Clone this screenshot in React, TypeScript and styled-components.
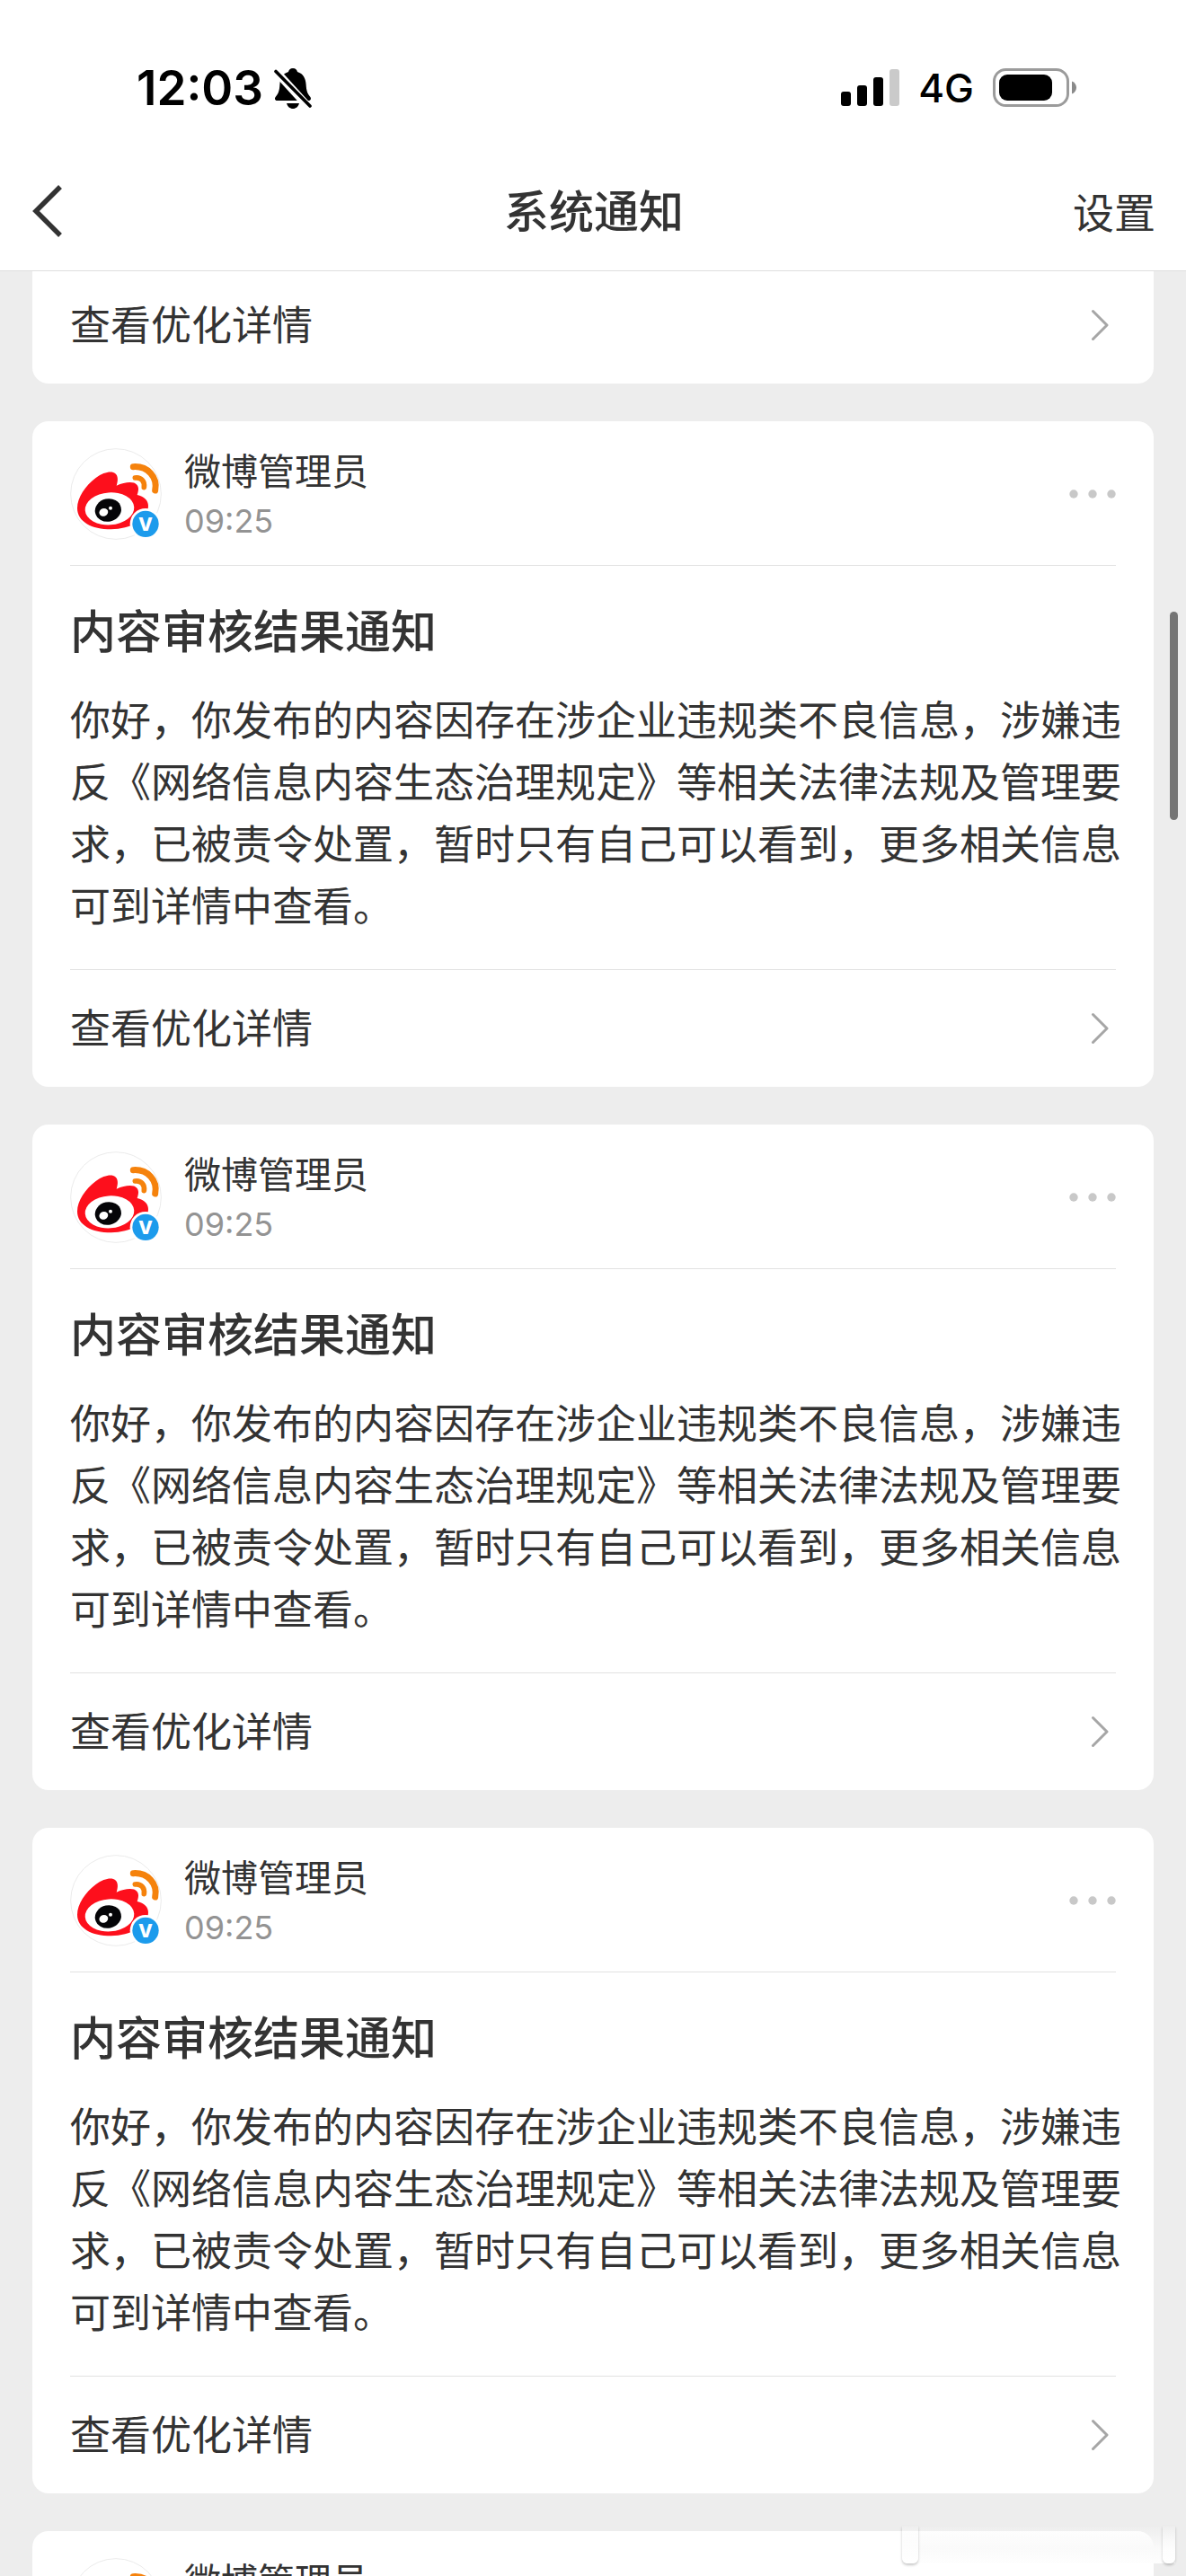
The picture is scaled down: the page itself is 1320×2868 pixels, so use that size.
import React from "react";
import styled, { createGlobalStyle } from "styled-components";

const INK = "#333333";
const LINE = "#e2e2e2";
const CANVAS = "#ededed";

const GlobalStyle = createGlobalStyle`
  * { box-sizing: border-box; }
  body {
    margin: 0;
    background: ${CANVAS};
    color: ${INK};
    font-family: Inter, "Noto Sans CJK SC", sans-serif;
  }
  button { border: 0; padding: 0; background: none; color: inherit; font: inherit; cursor: pointer; }
  h1, h2, p { margin: 0; }
  svg { display: block; flex: none; }
`;

const Screen = styled.div`
  position: relative;
  display: flex;
  flex-direction: column;
  height: 100vh;
  overflow: hidden;
`;

const Header = styled.header`
  position: relative;
  z-index: 1;
  flex: none;
  background: #fff;
  border-bottom: 1px solid #dedede;
`;

const StatusBar = styled.div`
  display: flex;
  align-items: center;
  justify-content: space-between;
  height: 172px;
  padding: 24px 122px 0 152px;
  color: #000;
`;

const StatusGroup = styled.div<{ $gap: number }>`
  display: flex;
  align-items: center;
  gap: ${(p) => p.$gap}px;
`;

const Clock = styled.time`
  font-size: 53px;
  font-weight: 600;
  line-height: 60px;
`;

const Network = styled.span`
  font-size: 44px;
  font-weight: 500;
  line-height: 60px;
`;

const NavBar = styled.nav`
  display: grid;
  grid-template-columns: 1fr auto 1fr;
  align-items: baseline;
  height: 129px;
  padding: 28px 34px 0 36px;
`;

const NavTitle = styled.h1`
  font-size: 50px;
  font-weight: 500;
  line-height: 72px;
`;

const BackButton = styled.button`
  align-self: start;
  justify-self: start;
  padding: 6px 0;
`;

const SettingsButton = styled.button`
  justify-self: end;
  font-size: 46px;
  line-height: 72px;
`;

const Feed = styled.main`
  display: flex;
  flex-direction: column;
  gap: 42px;
  margin-top: -6px;
  padding: 0 36px;
`;

const Card = styled.article<{ $continued?: boolean }>`
  flex: none;
  padding: 0 42px;
  border-radius: ${(p) => (p.$continued ? "0 0 18px 18px" : "18px")};
  background: #fff;
`;

const CardHead = styled.header`
  display: flex;
  align-items: center;
  gap: 25px;
  height: 161px;
  padding-top: 2px;
  border-bottom: 1px solid ${LINE};
`;

const Sender = styled.div`
  flex: 1;
  padding-top: 4px;
`;

const SenderName = styled.div`
  font-size: 41px;
  line-height: 56px;
`;

const SentAt = styled.time`
  display: block;
  color: #939393;
  font-size: 36px;
  line-height: 54px;
`;

const CardBody = styled.div`
  display: grid;
  gap: 34px;
  margin-right: -12px;
  padding: 44px 0 35px;
`;

const NoticeTitle = styled.h2`
  font-size: 51px;
  font-weight: 500;
  line-height: 60px;
`;

const NoticeText = styled.p`
  font-size: 45px;
  line-height: 69px;
`;

const DetailLink = styled.a`
  display: flex;
  align-items: center;
  justify-content: space-between;
  height: 131px;
  padding-right: 8px;
  border-top: 1px solid ${LINE};
  color: inherit;
  font-size: 45px;
  line-height: 69px;
  text-decoration: none;
`;

const ScrollThumb = styled.div`
  position: absolute;
  z-index: 2;
  top: 681px;
  right: 9px;
  width: 9px;
  height: 232px;
  border-radius: 5px;
  background: #757575;
`;

const Smudge = styled.div`
  position: absolute;
  z-index: 2;
  right: 12px;
  bottom: 14px;
  display: flex;
  justify-content: space-between;
  width: 304px;
  height: 42px;
  background: linear-gradient(rgba(250, 250, 250, 0), #fafafa 60%, #fefefe);
`;

const SmudgeEdge = styled.span<{ $width: number }>`
  width: ${(p) => p.$width}px;
  border-radius: 0 0 6px 6px;
  background: linear-gradient(rgba(255, 255, 255, 0), #fff);
  box-shadow: 0 2px 3px rgba(0, 0, 0, 0.22);
`;

const BellOff = () => (
  <svg width="42" height="45" viewBox="0 0 42 45" aria-hidden="true">
    <path
      d="M21 0c3 0 4.600 1.700 5 4 6.500 2 9.200 7.500 9.600 14 .4 7 1.600 10.500 4.400 13.500 1.700 1.900 1.200 4.500-1.500 4.500H3.500C.8 36 .3 33.400 2 31.500c2.800-3 4-6.500 4.400-13.500C6.800 11.500 9.500 6 16 4c.4-2.300 2-4 5-4z"
      fill="#000"
    />
    <path d="M14 39h14c-1 3.800-3.600 6-7 6s-6-2.200-7-6z" fill="#000" />
    <path d="M-1 0 41 46" stroke="#fff" strokeWidth="9" />
    <path d="M2 3.500 40 42" stroke="#000" strokeWidth="3.600" strokeLinecap="round" />
  </svg>
);

const Signal = () => (
  <svg width="65" height="42" viewBox="0 0 65 42" aria-hidden="true">
    <rect x="0" y="25" width="11" height="16" rx="3" />
    <rect x="18" y="18" width="11" height="23" rx="3" />
    <rect x="36" y="9" width="11" height="32" rx="3" />
    <rect x="54" y="0" width="11" height="41" rx="3" fill="#cacaca" />
  </svg>
);

const Battery = () => (
  <svg width="93" height="44" viewBox="0 0 93 44" aria-hidden="true">
    <rect x="1.500" y="1.500" width="82" height="40" rx="13" fill="none" stroke="#9b9b9b" strokeWidth="3" />
    <rect x="7" y="7" width="59" height="29" rx="9" />
    <path d="M88 14.500c3 1 5 3.700 5 7s-2 6-5 7z" fill="#8a8a8a" />
  </svg>
);

const BackIcon = () => (
  <svg width="34" height="58" viewBox="0 0 34 58" aria-hidden="true">
    <path d="M31 2 4 29l27 27" fill="none" stroke={INK} strokeWidth="5.500" />
  </svg>
);

const Chevron = () => (
  <svg width="20" height="36" viewBox="0 0 20 36" aria-hidden="true">
    <path d="M2.500 2.500 18 18 2.500 33.500" fill="none" stroke="#a6a6a6" strokeWidth="3" strokeLinecap="round" strokeLinejoin="round" />
  </svg>
);

const MoreIcon = () => (
  <svg width="52" height="60" viewBox="0 0 52 60" aria-hidden="true" fill="#c8c8c8">
    <circle cx="5" cy="30" r="4.700" />
    <circle cx="26" cy="30" r="4.700" />
    <circle cx="47" cy="30" r="4.700" />
  </svg>
);

const Avatar = () => (
  <svg width="102" height="102" viewBox="54 57 306 306" role="img" aria-label="微博管理员">
    <circle cx="207" cy="210" r="151" fill="#fff" stroke="#ebebeb" strokeWidth="3" />
    <path
      d="M78 257C78 222 105 182 140 156c28-21 55-24 65-14 9 8 10 22 4 40 28-12 57-15 68-3 7 8 6 19 1 34 23 5 37 18 37 37 0 44-60 78-124 78C126 328 78 302 78 257z"
      fill="#fd0f1c"
    />
    <ellipse cx="186" cy="259" rx="82" ry="54" fill="#fff" transform="rotate(-4 186 259)" />
    <ellipse cx="181" cy="264" rx="44" ry="38" fill="#050508" transform="rotate(-12 181 264)" />
    <ellipse cx="166" cy="271" rx="15" ry="13" fill="#fff" transform="rotate(-20 166 271)" />
    <circle cx="189" cy="257" r="6" fill="#fff" />
    <path d="M265 119c48-3 82 34 73 79" fill="none" stroke="#f5820c" strokeWidth="21" strokeLinecap="round" />
    <path d="M271 156c20-3 33 12 30 32" fill="none" stroke="#f5820c" strokeWidth="17" strokeLinecap="round" />
    <circle cx="306" cy="310" r="52" fill="#fff" />
    <circle cx="306" cy="310" r="44" fill="#1c9bec" />
    <text x="306" y="333" textAnchor="middle" fontFamily="Inter, sans-serif" fontWeight="800" fontSize="62" fill="#fff">
      V
    </text>
  </svg>
);

interface Notice {
  id: number;
  sender: string;
  time: string;
  title: string;
  text: string;
}

const notices: Notice[] = [1, 2, 3, 4].map((id) => ({
  id,
  sender: "微博管理员",
  time: "09:25",
  title: "内容审核结果通知",
  text: "你好，你发布的内容因存在涉企业违规类不良信息，涉嫌违反《网络信息内容生态治理规定》等相关法律法规及管理要求，已被责令处置，暂时只有自己可以看到，更多相关信息可到详情中查看。",
}));

const DetailRow = () => (
  <DetailLink href="#detail">
    查看优化详情
    <Chevron />
  </DetailLink>
);

const NoticeCard = ({ notice }: { notice: Notice }) => (
  <Card>
    <CardHead>
      <Avatar />
      <Sender>
        <SenderName>{notice.sender}</SenderName>
        <SentAt>{notice.time}</SentAt>
      </Sender>
      <button type="button" aria-label="更多">
        <MoreIcon />
      </button>
    </CardHead>
    <CardBody>
      <NoticeTitle>{notice.title}</NoticeTitle>
      <NoticeText>{notice.text}</NoticeText>
    </CardBody>
    <DetailRow />
  </Card>
);

export default function App() {
  return (
    <Screen lang="zh-CN">
      <GlobalStyle />
      <Header>
        <StatusBar>
          <StatusGroup $gap={12}>
            <Clock>12:03</Clock>
            <BellOff />
          </StatusGroup>
          <StatusGroup $gap={21}>
            <Signal />
            <Network>4G</Network>
            <Battery />
          </StatusGroup>
        </StatusBar>
        <NavBar>
          <BackButton type="button" aria-label="返回">
            <BackIcon />
          </BackButton>
          <NavTitle>系统通知</NavTitle>
          <SettingsButton type="button">设置</SettingsButton>
        </NavBar>
      </Header>
      <Feed>
        <Card $continued>
          <DetailRow />
        </Card>
        {notices.map((notice) => (
          <NoticeCard key={notice.id} notice={notice} />
        ))}
      </Feed>
      <ScrollThumb />
      <Smudge aria-hidden="true">
        <SmudgeEdge $width={18} />
        <SmudgeEdge $width={14} />
      </Smudge>
    </Screen>
  );
}
